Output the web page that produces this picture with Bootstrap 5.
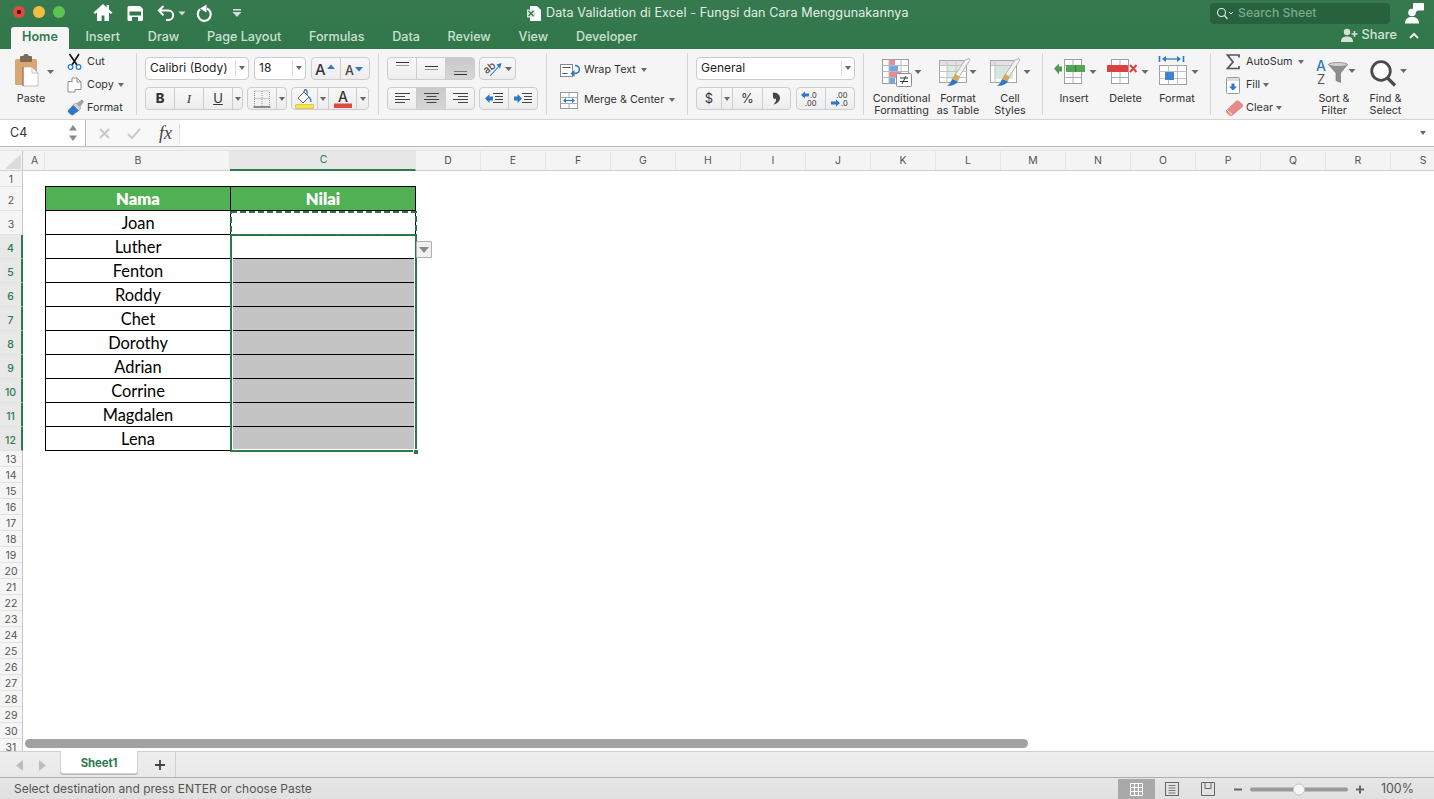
<!DOCTYPE html>
<html lang="en">
<head>
<meta charset="utf-8">
<title>Data Validation di Excel</title>
<link rel="stylesheet" href="https://cdn.jsdelivr.net/npm/bootstrap@5.3.0/dist/css/bootstrap.min.css">
<style>
html,body{height:799px;overflow:hidden;margin:0}
body{font-family:Inter,"Liberation Sans",sans-serif;font-size:10.8px;color:#333;background:#fff}
svg{display:block;flex:none;overflow:visible}
.shell{width:1434px;height:799px}
.titlebar{height:49px;background:linear-gradient(#37794f,#30774a);color:#fff}
.tr1{height:27px}
.tr2{height:22px}
.light{width:12px;height:12px;border-radius:50%;margin-top:-3px}
.light-r{background:radial-gradient(circle,#4a1512 0 2px,#e5483f 2.5px)}
.light-y{background:#f4bd3f}
.light-g{background:#5cc452}
.lights{margin-left:13px;gap:8px;width:52px}
.qat{margin-left:28px}
.doc-title{margin-left:284px;font-size:12.55px;color:#e3eee7;gap:5px;letter-spacing:.1px}
.searchbox{width:180px;height:21px;background:#28613e;border-radius:4px;margin-top:-1px;padding-left:6px;font-size:12.3px;color:#79ab8d;gap:4px;font-weight:500}
.persona{margin-left:15px;margin-right:10px}
.rtabs{margin-left:11px;gap:27.7px;flex-wrap:nowrap;font-size:12.6px;font-weight:500;color:#cde0d4;height:22px}
.rtab{line-height:20px;white-space:nowrap}
.rtab-on{background:#f5f5f5;color:#2e7a4a;font-weight:600;padding:0 11px;margin-right:-11px;border-radius:3px 3px 0 0}
.sharebox{gap:4px;font-size:12.8px;font-weight:500;color:#d3e3d9;margin-right:15px;margin-top:-6px}
.ribbon{height:71px;background:#f5f5f5;border-bottom:1px solid #d4d4d4;padding-top:4px}
.rg{height:62px;border-right:1px solid #d6d6d6;flex:none}
.rg1{width:137px}
.rg2{width:242px;padding:4px 0 0 8px}
.rg3{width:168px;padding:4px 0 0 8px}
.rg4{width:141px;padding:8px 0 0 13px;gap:14px}
.rg5{width:176px;padding:4px 0 0 8px}
.rg6{width:179px;padding-left:7px}
.rg7{width:168px;padding-left:5px}
.rg8{width:223px;border-right:0;padding-left:15px}
.rows{gap:7px}
.crow{gap:5px}
.crow4{gap:4px}
.pastecol{width:62px;margin-right:5px;line-height:12px}
.pastecol span{margin-top:1px}
.smallcol{height:62px}
.smallrow{height:16px;padding-top:2px;white-space:nowrap}
.smicon{width:20px;display:flex;justify-content:flex-start;align-items:center}
.cr{width:0;height:0;border-left:3.5px solid transparent;border-right:3.5px solid transparent;border-top:4px solid #6a6a6a;flex:none}
.crm{margin-left:3px}
.crw{margin-left:5px}
.combo{height:23px;background:#fff;border:1px solid #cbcbcb;border-radius:4px;font-size:12px;color:#222;padding:0 0 1px 4px}
.combo-font{width:104px}
.combo-size{width:52px}
.combo-num{width:159px}
.combo-arrow{width:13px;height:15px;border-left:1px solid #ddd;margin-left:auto}
.btn-group.rgrp{height:23px;flex:none}
.btn.rb{padding:0;height:23px;border:1px solid #cdcdcd;background:linear-gradient(#f8f8f8,#ededed);color:#333;display:flex;align-items:center;justify-content:center;border-radius:4px;flex:none;font-size:13px;line-height:1}
.btn.rb-on{background:linear-gradient(#c9c9c9,#d6d6d6)}
.w11{width:11px}.w12{width:12px}.w13{width:13px}.w26{width:26px}.w27{width:27px}.w29{width:29px}.w30{width:30px}.w31{width:31px}.w37{width:37px}
.bold-b{font-weight:800;font-size:14px}
.ital-i{font-family:"Liberation Serif",serif;font-style:italic;font-size:16px}
.und-u{text-decoration:underline;font-size:14px}
.numsign{font-size:15px}
.wrapline{height:16px;padding-top:2px;white-space:nowrap}
.wrapico{width:24px}
.bigbtn{flex:none}
.bigbtn span{line-height:12px;margin-top:1px;text-align:center;white-space:nowrap;color:#333}
.bw61{width:61px}.bw52{width:52px}.bw51{width:51px}
.smallcol8{width:82px}
.fbar{height:27px;background:#f8f8f8;border-bottom:1px solid #b9b9b9}
.namebox{width:86px;background:#fff;border-right:1px solid #bcbcbc;font-size:12.5px;padding-left:10px}
.fx-tools{width:94px;border-right:1px solid #ddd;height:19px}
.fxinput{background:#fff}
.fgap{height:4px;background:#f2f2f2;border-bottom:1px solid #e2e2e2}
.sheet{height:600px;position:relative;overflow:hidden}
.colhead{height:20px;background:#f4f4f4;border-bottom:1px solid #cfcfcf;color:#555;font-size:10.5px}
.ch{height:19px;border-right:1px solid #e6e6e6;flex:none;display:flex;align-items:center;justify-content:center;padding-left:2px}
.ch-corner{width:23px;border-right:1px solid #c8c8c8;justify-content:flex-end;padding-left:0}
.ch-a{width:22px}.ch-b{width:185px}.ch-c{width:186px;background:#e7e7e7;color:#2d7a4b;height:20px;border-bottom:2px solid #2d7a4b;margin-bottom:-1px}
.ch-n{width:65px;padding-left:0}
.rowcol{width:23px;background:#f5f5f5;border-right:1px solid #c8c8c8;color:#555;font-size:10.5px;flex:none}
.rh{display:flex;align-items:center;justify-content:center;border-bottom:1px solid #e2e2e2;height:16px;padding-top:2px}
.rhb{height:24px;padding-top:5px}
.rh-on{background:#e8e8e8;color:#2d7a4b;font-weight:500;border-right:2px solid #2d7a4b;margin-right:-1px}
.cells{position:relative;flex:1}
.xtable{position:absolute;left:22px;top:15px;width:371px;table-layout:fixed;border-collapse:separate;border-spacing:0;font-family:Lato,"Liberation Sans",sans-serif;font-size:16.4px;color:#000}
.xtable td,.xtable th{padding:1px 0 0;height:24px;text-align:center;border-right:1px solid #000;border-bottom:1px solid #000;line-height:22px;font-weight:400}
.xtable tr>:first-child{border-left:1px solid #000}
.xtable th{height:25px;border-top:1px solid #000;background:#4fb054;color:#fff;font-weight:800;font-size:16.5px}
.xtable .grayf{background:#c4c4c4}
.col1{width:186px}
.selbox{position:absolute;left:230px;top:83px;width:187px;height:218px;border:2px solid #2f7a4c;box-shadow:inset 0 0 0 1px #fff}
.marching{position:absolute;left:230px;top:60px}
.handle{position:absolute;left:413px;top:298px;background:#2f7a4c;border:1px solid #fff;box-sizing:content-box;width:4px;height:4px}
.ddbtn{position:absolute;left:416px;top:90px;width:16px;height:17px;background:#f0f0f0;border:1px solid #b0b0b0;border-radius:1px;display:flex;align-items:center;justify-content:center}
.ddbtn i{width:0;height:0;border-left:5px solid transparent;border-right:5px solid transparent;border-top:6px solid #8a8a8a}
.hscroll{position:absolute;left:25px;top:588px;width:1003px;height:9px;background:#a1a1a1;border-radius:5px}
.tabbar{height:26px;background:linear-gradient(#eeeeee,#e9e9e9);border-top:1px solid #cfcfcf}
.sheettab{width:78px;height:23px;margin-left:14px;margin-top:-1px;padding-top:3px;background:#fff;border:1px solid #d0d0d0;border-top:0;border-radius:0 0 3px 3px;color:#2d7a4b;font-weight:700;font-size:11.4px;box-shadow:0 1px 0 #bbb;letter-spacing:-.1px}
.addsheet{width:38px;height:25px;padding-left:7px;border-right:1px solid #d0d0d0}
.statusbar{height:22px;background:linear-gradient(#e6e6e6,#e0e0e0);border-top:1px solid #aeaeae;color:#555;font-size:12px;padding:1px 0 0 14px}
.view-on{width:37px;height:21px;background:#a9a9a9;margin-left:auto}
.zoomtxt{font-size:12.4px;color:#555;width:53px}
</style>
</head>
<body>
<div class="shell d-flex flex-column">

  <header class="titlebar">
    <div class="tr1 d-flex align-items-center">
      <div class="lights d-flex"><span class="light light-r"></span><span class="light light-y"></span><span class="light light-g"></span></div>
      <svg class="qat" width="150" height="27" viewBox="0 0 150 27">
        <path d="M10 4 L0.5 12.5 l1.6 1.6 L4 12.4 V21 h4.6 v-5.5 h2.8 V21 H16 V12.4 l1.9 1.7 1.6-1.6 -3.5-3.1 V5h-2.2v2.4z" fill="#fff"/>
        <path d="M36 6h11l3 3v10.5a1.5 1.5 0 0 1-1.5 1.5H36a1.5 1.5 0 0 1-1.5-1.5V7.5A1.5 1.5 0 0 1 36 6z" fill="#fff"/>
        <rect x="36.5" y="11.5" width="11.5" height="4" fill="#33784d"/><rect x="39" y="17" width="6" height="4" fill="#33784d"/>
        <path d="M70.5 6 L65.8 10.6 L70.5 15.2 M66 10.6 H75.5 a4.7 4.7 0 0 1 0 9.4 H73" fill="none" stroke="#fff" stroke-width="2"/>
        <polygon points="85.5,11.5 92.5,11.5 89,15.5" fill="#cfe0d5"/>
        <path d="M114 8.400 a6.500 6.500 0 1 1 -7 1" fill="none" stroke="#fff" stroke-width="2.200"/>
        <path d="M113.500 4.500 v8 l-6.500 -4z" fill="#fff"/>
        <rect x="140" y="9" width="8" height="1.6" fill="#cfe0d5"/><polygon points="139.5,12 148.5,12 144,17" fill="#cfe0d5"/>
      </svg>
      <div class="doc-title d-flex align-items-center">
        <svg width="14" height="15" viewBox="0 0 14 15"><path d="M3 0h7l4 4v11H3z" fill="#fff"/><rect x="0" y="3.5" width="8" height="8" fill="#d7e6dc"/><path d="M1.5 5 l5 5 M6.5 5 l-5 5" stroke="#33784d" stroke-width="1.2"/></svg>
        <span>Data Validation di Excel - Fungsi dan Cara Menggunakannya</span>
      </div>
      <div class="searchbox d-flex align-items-center ms-auto">
        <svg width="18" height="13" viewBox="0 0 18 13"><circle cx="5.5" cy="5.5" r="4" fill="none" stroke="#e2eee6" stroke-width="1.1"/><path d="M8.5 8.5l3 3.5" stroke="#e2eee6" stroke-width="1.2"/><path d="M13 5l2 2 2-2" fill="none" stroke="#e2eee6" stroke-width="1"/></svg>
        <span>Search Sheet</span>
      </div>
      <svg class="persona" width="19" height="21" viewBox="0 0 19 21"><rect x="8" y="0" width="11" height="7.5" rx="1" fill="#fff"/><polygon points="10,7 13,7 10,10" fill="#fff"/><circle cx="7" cy="9.5" r="3.8" fill="#fff"/><path d="M0 20.5 c0-5 3-6.5 7-6.5 s7 1.500 7 6.500z" fill="#fff"/></svg>
    </div>
    <div class="tr2 d-flex">
      <nav class="nav rtabs">
        <span class="rtab rtab-on">Home</span>
        <span class="rtab">Insert</span>
        <span class="rtab">Draw</span>
        <span class="rtab">Page Layout</span>
        <span class="rtab">Formulas</span>
        <span class="rtab">Data</span>
        <span class="rtab">Review</span>
        <span class="rtab">View</span>
        <span class="rtab">Developer</span>
      </nav>
      <div class="sharebox d-flex align-items-center ms-auto">
        <svg width="17" height="14" viewBox="0 0 17 14"><circle cx="6" cy="4" r="3.2" fill="#d3e3d9"/><path d="M0 14c0-4 2-5.500 6-5.500s6 1.500 6 5.500z" fill="#d3e3d9"/><path d="M13.500 3v6M10.500 6h6" stroke="#d3e3d9" stroke-width="1.600"/></svg>
        <span>Share</span>
        <svg class="ms-2" width="10" height="7" viewBox="0 0 10 7"><path d="M1 6l4-4 4 4" fill="none" stroke="#e3eee7" stroke-width="2"/></svg>
      </div>
    </div>
  </header>

  <section class="ribbon d-flex">
    <!-- clipboard -->
    <div class="rg rg1 d-flex">
      <div class="pastecol d-flex flex-column align-items-center">
        <svg width="62" height="39" viewBox="0 0 62 39">
          <rect x="15" y="6" width="22" height="26" rx="1.500" fill="#d9a870"/>
          <rect x="20" y="3" width="12" height="6" rx="1" fill="#7c6a58"/><rect x="23.500" y="1" width="5" height="3" rx="1.500" fill="#7c6a58"/>
          <path d="M23 14h9l6 6v13H23z" fill="#fff" stroke="#b7b0a8" stroke-width=".8"/><path d="M23 14v19" stroke="#a8543c" stroke-width="1"/><path d="M32 14v6h6" fill="none" stroke="#b7b0a8" stroke-width=".8"/>
          <polygon points="47,17 54,17 50.500,21" fill="#6a6a6a"/>
        </svg>
        <span>Paste</span>
      </div>
      <div class="smallcol d-flex flex-column justify-content-between">
        <div class="smallrow d-flex align-items-center"><span class="smicon"><svg width="15" height="16" viewBox="0 0 15 16"><path d="M2.500 0l7.500 11M12 0L5 11" stroke="#111" stroke-width="1.600" fill="none"/><circle cx="3.500" cy="13" r="2.300" fill="#fff" stroke="#2e78c7" stroke-width="1.200"/><circle cx="11.500" cy="13" r="2.300" fill="#fff" stroke="#2e78c7" stroke-width="1.200"/></svg></span><span>Cut</span></div>
        <div class="smallrow d-flex align-items-center"><span class="smicon"><svg width="15" height="16" viewBox="0 0 15 16"><path d="M5 1h5l4 4v7.500H5z" fill="#fff" stroke="#8f8f8f"/><path d="M10 1v4h4" fill="none" stroke="#8f8f8f"/><path d="M5 4.500H1V15h7v-2.500" fill="#fff" stroke="#8f8f8f"/></svg></span><span>Copy</span><span class="cr crm ms-1"></span></div>
        <div class="smallrow d-flex align-items-center"><span class="smicon"><svg width="17" height="16" viewBox="0 0 17 16"><path d="M10 3.500L15 0l1.500 1.500L13 6.500z" fill="#a4a4a4" stroke="#777" stroke-width=".5"/><path d="M6 5l2.800-2 5 5-2 2.800z" fill="#d6d6d6" stroke="#888" stroke-width=".6"/><path d="M6 5L0.500 11 c1.500 3 5 4.500 5 4.500 L11.800 10.800z" fill="#2e78c7"/></svg></span><span>Format</span></div>
      </div>
    </div>
    <!-- font -->
    <div class="rg rg2 d-flex flex-column rows">
      <div class="d-flex crow">
        <div class="combo combo-font d-flex align-items-center"><span>Calibri (Body)</span><span class="combo-arrow d-flex align-items-center justify-content-center"><i class="cr"></i></span></div>
        <div class="combo combo-size d-flex align-items-center"><span>18</span><span class="combo-arrow d-flex align-items-center justify-content-center"><i class="cr"></i></span></div>
        <div class="btn-group rgrp"><button class="btn rb w30"><svg width="24" height="15" viewBox="0 0 24 15"><text x="1" y="13.500" font-family="Inter,sans-serif" font-size="15" font-weight="500" fill="#333">A</text><polygon points="13,8 21,8 17,3.500" fill="#2e78c7"/></svg></button><button class="btn rb w30"><svg width="22" height="14" viewBox="0 0 22 14"><text x="1" y="12.500" font-family="Inter,sans-serif" font-size="12.500" font-weight="500" fill="#444">A</text><polygon points="11,5 19,5 15,9.500" fill="#2e78c7"/></svg></button></div>
      </div>
      <div class="d-flex crow4">
        <div class="btn-group rgrp"><button class="btn rb w30 bold-b">B</button><button class="btn rb w30 ital-i">I</button><button class="btn rb w30 und-u">U</button><button class="btn rb w11"><i class="cr"></i></button></div>
        <div class="btn-group rgrp"><button class="btn rb w30"><svg width="18" height="18" viewBox="0 0 18 18"><path d="M1.500 1h15v15M1.500 1v15M9 1v15M1.500 8.500h15" fill="none" stroke="#9c9c9c" stroke-width="1" stroke-dasharray="1 1"/><path d="M0.500 17h17" stroke="#222" stroke-width="1"/></svg></button><button class="btn rb w11"><i class="cr"></i></button></div>
        <div class="btn-group rgrp"><button class="btn rb w27"><svg width="19" height="20" viewBox="0 0 19 20"><path d="M3 9l6-6 5 5-6 6z" fill="#fff" stroke="#666"/><path d="M9 3c0-3 3-3 3 0v3" fill="none" stroke="#2e78c7" stroke-width="1.300"/><path d="M14 8c2 2 2 4 2 5" stroke="#2e78c7" stroke-width="1.500" fill="none"/><rect x="0.500" y="15.500" width="18" height="4" rx=".5" fill="#f6e44a" stroke="#d6bf2e" stroke-width=".7"/></svg></button><button class="btn rb w12"><i class="cr"></i></button><button class="btn rb w29"><svg width="18" height="19" viewBox="0 0 18 19"><text x="9" y="13" text-anchor="middle" font-family="Inter,sans-serif" font-size="14" font-weight="500" fill="#333">A</text><rect x="0" y="14.500" width="18" height="4.500" fill="#dd4b45"/></svg></button><button class="btn rb w13"><i class="cr"></i></button></div>
      </div>
    </div>
    <!-- alignment -->
    <div class="rg rg3 d-flex flex-column rows">
      <div class="d-flex crow4">
        <div class="btn-group rgrp">
          <button class="btn rb w30"><svg width="13" height="17" viewBox="0 0 13 17"><path d="M0 2.500h13" stroke="#333"/><path d="M0 5.500h13" stroke="#999"/></svg></button>
          <button class="btn rb w30"><svg width="13" height="17" viewBox="0 0 13 17"><path d="M0 6.500h13" stroke="#333"/><path d="M0 9.500h13" stroke="#999"/></svg></button>
          <button class="btn rb rb-on w30"><svg width="13" height="17" viewBox="0 0 13 17"><path d="M0 11.500h13" stroke="#777"/><path d="M0 14.500h13" stroke="#333"/></svg></button>
        </div>
        <button class="btn rb w37"><svg width="29" height="19" viewBox="0 0 29 19"><text x="1" y="12" font-family="Inter,sans-serif" font-size="10.500" fill="#333" transform="rotate(-38 7 10)">ab</text><path d="M7 17L17 6" stroke="#2e78c7" stroke-width="1.100"/><polygon points="18.500,4 13.500,5.500 17,9.500" fill="#2e78c7"/><polygon points="22,8 29,8 25.500,12" fill="#6a6a6a"/></svg></button>
      </div>
      <div class="d-flex crow4">
        <div class="btn-group rgrp">
          <button class="btn rb w30"><svg width="15" height="13" viewBox="0 0 15 13"><path d="M0 1.500h15M0 4.500h10M0 7.500h15M0 10.500h10" stroke="#444"/></svg></button>
          <button class="btn rb rb-on w30"><svg width="15" height="13" viewBox="0 0 15 13"><path d="M0 1.500h15M2.500 4.500h10M0 7.500h15M2.500 10.500h10" stroke="#444"/></svg></button>
          <button class="btn rb w30"><svg width="15" height="13" viewBox="0 0 15 13"><path d="M0 1.500h15M5 4.500h10M0 7.500h15M5 10.500h10" stroke="#444"/></svg></button>
        </div>
        <div class="btn-group rgrp">
          <button class="btn rb w30"><svg width="18" height="11" viewBox="0 0 18 11"><path d="M8 .5h10M10 3.500h8M10 6.500h8M8 9.500h10" stroke="#444"/><path d="M0 5.500L4.500 1v2.500H8v4H4.500V10z" fill="#2e78c7"/></svg></button>
          <button class="btn rb w30"><svg width="18" height="11" viewBox="0 0 18 11"><path d="M8 .5h10M10 3.500h8M10 6.500h8M8 9.500h10" stroke="#444"/><path d="M8 5.500L3.500 1v2.500H0v4h3.500V10z" fill="#2e78c7"/></svg></button>
        </div>
      </div>
    </div>
    <!-- wrap / merge -->
    <div class="rg rg4 d-flex flex-column">
      <div class="wrapline d-flex align-items-center"><span class="wrapico"><svg width="21" height="13" viewBox="0 0 21 13"><rect x=".5" y=".5" width="12" height="12" fill="#fff" stroke="#888"/><path d="M2.500 3.500h8M2.500 9.500h5" stroke="#555"/><path d="M15 1.500c6 0 6 8-1 8" fill="none" stroke="#2e78c7" stroke-width="1.500"/><polygon points="14.500,6 10.500,9.500 14.500,13" fill="#2e78c7"/></svg></span><span>Wrap Text</span><span class="cr crw"></span></div>
      <div class="wrapline d-flex align-items-center"><span class="wrapico"><svg width="18" height="17" viewBox="0 0 18 17"><rect x=".5" y=".5" width="17" height="16" fill="#fff" stroke="#999"/><path d="M.5 5.500h17M.5 11.500h17M9 .5v5M9 11.500v5" stroke="#aaa"/><rect x="1" y="6" width="16" height="5" fill="#fff"/><path d="M4 8.500h10" stroke="#2e78c7" stroke-width="1.200"/><path d="M6 6L3 8.500 6 11zM12 6l3 2.500L12 11z" fill="#2e78c7"/></svg></span><span>Merge &amp; Center</span><span class="cr crw"></span></div>
    </div>
    <!-- number -->
    <div class="rg rg5 d-flex flex-column rows">
      <div class="combo combo-num d-flex align-items-center"><span>General</span><span class="combo-arrow d-flex align-items-center justify-content-center"><i class="cr"></i></span></div>
      <div class="d-flex crow">
        <div class="btn-group rgrp">
          <button class="btn rb w26 numsign">$</button><button class="btn rb w12"><i class="cr"></i></button><button class="btn rb w31 numsign">%</button><button class="btn rb w29"><svg width="9" height="13" viewBox="0 0 9 13"><path d="M1 .5c5 0 7 3 7 5.500 0 3-3 6-6.500 6.500 2-2 3-4 2.500-6-1 1-3.500 0-3-2.500C1 2.500 .5 1.500 1 .5z" fill="#444"/></svg></button>
        </div>
        <div class="btn-group rgrp">
          <button class="btn rb w30"><svg width="20" height="16" viewBox="0 0 20 16"><path d="M0 4L4 .5v2h4v3H4v2z" fill="#2e78c7"/><text x="9" y="7" font-family="Inter,sans-serif" font-size="7.500" fill="#333">.0</text><text x="4" y="15" font-family="Inter,sans-serif" font-size="7.500" fill="#333">.00</text></svg></button>
          <button class="btn rb w30"><svg width="20" height="16" viewBox="0 0 20 16"><text x="6" y="7" font-family="Inter,sans-serif" font-size="7.500" fill="#333">.00</text><path d="M10 12L6 8.500v2H1v3h5v2z" fill="#2e78c7"/><text x="11" y="15" font-family="Inter,sans-serif" font-size="7.500" fill="#333">.0</text></svg></button>
        </div>
      </div>
    </div>
    <!-- styles -->
    <div class="rg rg6 d-flex">
      <div class="bigbtn bw61 d-flex flex-column align-items-center">
        <svg width="61" height="39" viewBox="0 0 61 39">
          <rect x="11.500" y="6.500" width="26" height="24" fill="#fff" stroke="#9a9a9a"/>
          <rect x="18" y="7" width="6" height="6" fill="#e98a9a"/><rect x="18" y="13" width="9" height="6" fill="#6ea9e4"/><rect x="18" y="19" width="12" height="5" fill="#e98a9a"/><rect x="18" y="24" width="6" height="6" fill="#6ea9e4"/>
          <path d="M18 6.500v24M30 6.500v24M11.500 12.500h26M11.500 18.500h26M11.500 24.500h26" stroke="#b9b9b9" fill="none"/>
          <rect x="25.500" y="20.500" width="15" height="13" rx="1" fill="#fff" stroke="#8c8c8c"/>
          <path d="M29 25h8M29 28.500h8M35 23l-4 8" stroke="#333" stroke-width="1" fill="none"/>
          <polygon points="43.500,17 50.500,17 47,21" fill="#6a6a6a"/>
        </svg>
        <span>Conditional<br>Formatting</span>
      </div>
      <div class="bigbtn bw52 d-flex flex-column align-items-center">
        <svg width="52" height="39" viewBox="0 0 52 39">
          <rect x="7.500" y="7.500" width="27" height="22" fill="#fff" stroke="#a6a6a6"/><rect x="8" y="8" width="26" height="4" fill="#e2e2e2"/>
          <rect x="15" y="12" width="13" height="14" fill="#dbece3"/>
          <path d="M15 7.500v22M24 7.500v22M7.500 12.500h27M7.500 18.500h27M7.500 24.500h27" stroke="#c4c4c4" fill="none"/>
          <path d="M33 7l4-1.500 1 1.500-11 17-4-2z" fill="#f2f2f2" stroke="#9a9a9a" stroke-width=".7"/>
          <path d="M23 21l4.500 2.500-1.500 5-6-2.500z" fill="#d9a55c"/>
          <path d="M20 26l6 2.500c-2 3-7 5-11 4 3-1.500 4-3.500 5-6.500z" fill="#2e78c7"/>
          <polygon points="37.500,17 44.500,17 41,21" fill="#6a6a6a"/>
        </svg>
        <span>Format<br>as Table</span>
      </div>
      <div class="bigbtn bw52 d-flex flex-column align-items-center">
        <svg width="52" height="39" viewBox="0 0 52 39">
          <rect x="6.500" y="7.500" width="26" height="22" fill="#fff" stroke="#a6a6a6"/><rect x="7" y="8" width="25" height="4" fill="#e2e2e2"/>
          <rect x="11" y="12" width="18" height="14" fill="#d7e7de"/>
          <path d="M11 7.500v22M7 12.500h25" stroke="#c4c4c4" fill="none"/>
          <path d="M31 7l4-1.500 1 1.500-11 17-4-2z" fill="#f2f2f2" stroke="#9a9a9a" stroke-width=".7"/>
          <path d="M21 21l4.500 2.500-1.500 5-6-2.500z" fill="#d9a55c"/>
          <path d="M18 26l6 2.500c-2 3-7 5-11 4 3-1.500 4-3.500 5-6.500z" fill="#2e78c7"/>
          <polygon points="39.500,17 46.500,17 43,21" fill="#6a6a6a"/>
        </svg>
        <span>Cell<br>Styles</span>
      </div>
    </div>
    <!-- cells -->
    <div class="rg rg7 d-flex">
      <div class="bigbtn bw52 d-flex flex-column align-items-center">
        <svg width="52" height="39" viewBox="0 0 52 39">
          <rect x="16.500" y="6.500" width="17" height="24" fill="#fff" stroke="#a0a0a0"/><path d="M25 6.500v24M16.500 12.500h17M16.500 24.500h17" stroke="#b0b0b0"/>
          <path d="M6 15.500l5-5v3h3v5h-3v3z" fill="#4f9a4f"/>
          <rect x="18" y="12" width="19" height="7" rx=".5" fill="#54a554"/><path d="M27.500 12v7" stroke="#2f7a35"/>
          <polygon points="41.500,17 48.500,17 45,21" fill="#6a6a6a"/>
        </svg>
        <span>Insert</span>
      </div>
      <div class="bigbtn bw51 d-flex flex-column align-items-center">
        <svg width="51" height="39" viewBox="0 0 51 39">
          <rect x="11.500" y="6.500" width="17" height="24" fill="#fff" stroke="#a0a0a0"/><path d="M20 6.500v24M11.500 24.500h17" stroke="#b0b0b0"/>
          <rect x="7" y="12" width="21" height="7" rx=".5" fill="#d9423e"/>
          <path d="M30 12l6.500 7M36.500 12L30 19" stroke="#d9423e" stroke-width="2"/>
          <polygon points="41.500,17 48.500,17 45,21" fill="#6a6a6a"/>
        </svg>
        <span>Delete</span>
      </div>
      <div class="bigbtn bw52 d-flex flex-column align-items-center">
        <svg width="52" height="39" viewBox="0 0 52 39">
          <path d="M8.500 3v6M32.500 3v6" stroke="#2e78c7" stroke-width="1.600"/><path d="M13 6h15" stroke="#2e78c7" stroke-width="1.300"/><path d="M15 3l-4 3 4 3zM26 3l4 3-4 3z" fill="#2e78c7"/>
          <rect x="8.500" y="12.500" width="27" height="19" fill="#fff" stroke="#a0a0a0"/><path d="M17.500 12.500v19M26.500 12.500v19M8.500 18.500h27M8.500 25.500h27" stroke="#c0c0c0"/>
          <rect x="14" y="19" width="9" height="8" rx=".5" fill="#3f82d0"/>
          <polygon points="40.500,17 47.500,17 44,21" fill="#6a6a6a"/>
        </svg>
        <span>Format</span>
      </div>
    </div>
    <!-- editing -->
    <div class="rg rg8 d-flex">
      <div class="smallcol smallcol8 d-flex flex-column justify-content-between">
        <div class="smallrow d-flex align-items-center"><span class="smicon"><svg width="14" height="16" viewBox="0 0 14 16"><path d="M13 3.500V1H1.500L7 8l-5.500 6.500H13V12" fill="none" stroke="#555" stroke-width="1.700"/></svg></span><span>AutoSum</span><span class="cr crw"></span></div>
        <div class="smallrow d-flex align-items-center"><span class="smicon"><svg width="14" height="17" viewBox="0 0 14 17"><rect x=".5" y=".5" width="13" height="16" rx="1" fill="#fff" stroke="#999"/><rect x="1" y="1" width="12" height="3" fill="#ddd"/><path d="M7 13.500L3 9.500h2.500V6.500h3v3H11z" fill="#2e78c7"/></svg></span><span>Fill</span><span class="cr crm"></span></div>
        <div class="smallrow d-flex align-items-center"><span class="smicon"><svg width="17" height="16" viewBox="0 0 17 16"><path d="M.5 10.500L10 1.500c1-.8 2-.8 3 0l3 2.500c.8.800.8 2 0 3L6.500 15c-.8.800-2 .6-3 0L1 12.800c-.8-.7-1-1.500-.5-2.300z" fill="#e98a8a" stroke="#c86c6c" stroke-width=".6"/><path d="M1 10l5 4.500" stroke="#fff" stroke-width="1"/></svg></span><span>Clear</span><span class="cr crm"></span></div>
      </div>
      <div class="bigbtn bw52 d-flex flex-column align-items-center">
        <svg width="52" height="39" viewBox="0 0 52 39">
          <text x="8" y="18" font-family="Inter,sans-serif" font-size="14" font-weight="500" fill="#2e78c7">A</text>
          <text x="9" y="31" font-family="Inter,sans-serif" font-size="13" fill="#555">Z</text>
          <path d="M20.500 11.500h19l-7 8.500v9.500l-4.500-2v-7.500z" fill="#8f8f8f" stroke="#666" stroke-width=".6"/>
          <ellipse cx="30" cy="11.500" rx="9.500" ry="2" fill="#d2d2d2" stroke="#777" stroke-width=".7"/>
          <polygon points="40.500,16 47.500,16 44,20" fill="#6a6a6a"/>
        </svg>
        <span>Sort &amp;<br>Filter</span>
      </div>
      <div class="bigbtn bw51 d-flex flex-column align-items-center">
        <svg width="51" height="39" viewBox="0 0 51 39">
          <circle cx="21" cy="18" r="9.300" fill="#fff" stroke="#4a4a4a" stroke-width="2.800"/>
          <path d="M27.500 25L35 32.500" stroke="#4a4a4a" stroke-width="3.200"/>
          <polygon points="40,16 47,16 43.500,20" fill="#6a6a6a"/>
        </svg>
        <span>Find &amp;<br>Select</span>
      </div>
    </div>
  </section>

  <section class="fbar d-flex">
    <div class="namebox d-flex align-items-center justify-content-between">
      <span>C4</span>
      <svg class="me-2" width="8" height="16" viewBox="0 0 8 16"><polygon points="4,0 8,5.500 0,5.500" fill="#8a8a8a"/><polygon points="4,16 8,10.500 0,10.500" fill="#8a8a8a"/></svg>
    </div>
    <div class="fx-tools d-flex align-items-center align-self-center">
      <svg width="94" height="19" viewBox="0 0 94 19">
        <path d="M14 5l9 9M23 5l-9 9" stroke="#c9c9c9" stroke-width="2"/>
        <path d="M42 10l4 4 8-9" fill="none" stroke="#c9c9c9" stroke-width="2"/>
        <text x="73" y="15" font-family="Liberation Serif,serif" font-style="italic" font-size="18" fill="#444">fx</text>
      </svg>
    </div>
    <div class="fxinput flex-grow-1 d-flex align-items-center justify-content-end pe-2"><span class="cr"></span></div>
  </section>
  <div class="fgap"></div>

  <main class="sheet">
    <div class="colhead d-flex">
      <div class="ch ch-corner"><svg width="22" height="19" viewBox="0 0 22 19"><polygon points="21,3 21,18 5,18" fill="#dcdcdc"/></svg></div>
      <div class="ch ch-a">A</div><div class="ch ch-b">B</div><div class="ch ch-c">C</div><div class="ch ch-n">D</div><div class="ch ch-n">E</div><div class="ch ch-n">F</div><div class="ch ch-n">G</div><div class="ch ch-n">H</div><div class="ch ch-n">I</div><div class="ch ch-n">J</div><div class="ch ch-n">K</div><div class="ch ch-n">L</div><div class="ch ch-n">M</div><div class="ch ch-n">N</div><div class="ch ch-n">O</div><div class="ch ch-n">P</div><div class="ch ch-n">Q</div><div class="ch ch-n">R</div><div class="ch ch-n">S</div>
    </div>
    <div class="d-flex">
      <div class="rowcol">
        <div class="rh">1</div><div class="rh rhb">2</div><div class="rh rhb">3</div>
        <div class="rh rhb rh-on">4</div><div class="rh rhb rh-on">5</div><div class="rh rhb rh-on">6</div><div class="rh rhb rh-on">7</div><div class="rh rhb rh-on">8</div><div class="rh rhb rh-on">9</div><div class="rh rhb rh-on">10</div><div class="rh rhb rh-on">11</div><div class="rh rhb rh-on">12</div>
        <div class="rh">13</div><div class="rh">14</div><div class="rh">15</div><div class="rh">16</div><div class="rh">17</div><div class="rh">18</div><div class="rh">19</div><div class="rh">20</div><div class="rh">21</div><div class="rh">22</div><div class="rh">23</div><div class="rh">24</div><div class="rh">25</div><div class="rh">26</div><div class="rh">27</div><div class="rh">28</div><div class="rh">29</div><div class="rh">30</div><div class="rh">31</div>
      </div>
      <div class="cells">
        <table class="xtable">
          <colgroup><col class="col1"><col></colgroup>
          <tr><th>Nama</th><th>Nilai</th></tr>
          <tr><td>Joan</td><td></td></tr>
          <tr><td>Luther</td><td></td></tr>
          <tr><td>Fenton</td><td class="grayf"></td></tr>
          <tr><td>Roddy</td><td class="grayf"></td></tr>
          <tr><td>Chet</td><td class="grayf"></td></tr>
          <tr><td>Dorothy</td><td class="grayf"></td></tr>
          <tr><td>Adrian</td><td class="grayf"></td></tr>
          <tr><td>Corrine</td><td class="grayf"></td></tr>
          <tr><td>Magdalen</td><td class="grayf"></td></tr>
          <tr><td>Lena</td><td class="grayf"></td></tr>
        </table>
      </div>
    </div>
    <div class="selbox"></div>
    <svg class="marching" width="187" height="25" viewBox="0 0 187 25"><rect x="1" y="1" width="185" height="23" fill="#fff" fill-opacity="0" stroke="#2a7447" stroke-width="2" stroke-dasharray="6 3"/></svg>
    <div class="handle"></div>
    <div class="ddbtn"><i></i></div>
    <div class="hscroll"></div>
  </main>

  <section class="tabbar d-flex align-items-start">
    <svg class="ms-3 mt-2" width="30" height="11" viewBox="0 0 30 11"><polygon points="0,5.500 7,0 7,11" fill="#bdbdbd"/><polygon points="30,5.500 23,0 23,11" fill="#bdbdbd"/></svg>
    <div class="sheettab d-flex align-items-center justify-content-center">Sheet1</div>
    <div class="addsheet d-flex align-items-center justify-content-center"><svg width="12" height="12" viewBox="0 0 12 12"><path d="M6 1v10M1 6h10" stroke="#444" stroke-width="1.800"/></svg></div>
  </section>

  <footer class="statusbar d-flex align-items-center">
    <span>Select destination and press ENTER or choose Paste</span>
    <div class="view-on d-flex align-items-center justify-content-center"><svg width="13" height="13" viewBox="0 0 13 13"><path d="M.5.5h12v12H.5zM4.500.5v12M8.500.5v12M.5 4.500h12M.5 8.500h12" fill="none" stroke="#fff"/></svg></div>
    <svg width="226" height="21" viewBox="0 0 226 21">
      <rect x="10.500" y="3.500" width="13" height="13" fill="none" stroke="#666"/><path d="M13.500 6.500h7M13.500 9h7M13.500 11.500h7M13.500 14h7" stroke="#777"/>
      <path d="M46.500 3.500h13v13h-13zM50 3.500v6h6v-6" fill="none" stroke="#666"/>
      <path d="M79 10.500h8" stroke="#666" stroke-width="2"/>
      <rect x="95" y="8.500" width="98" height="4" rx="2" fill="#9a9a9a"/>
      <circle cx="144" cy="10.500" r="5.500" fill="#f6f6f6" stroke="#c4c4c4"/>
      <path d="M201 10.500h8M205 6.500v8" stroke="#666" stroke-width="2"/>
    </svg>
    <span class="zoomtxt">100%</span>
  </footer>
</div>
</body>
</html>
